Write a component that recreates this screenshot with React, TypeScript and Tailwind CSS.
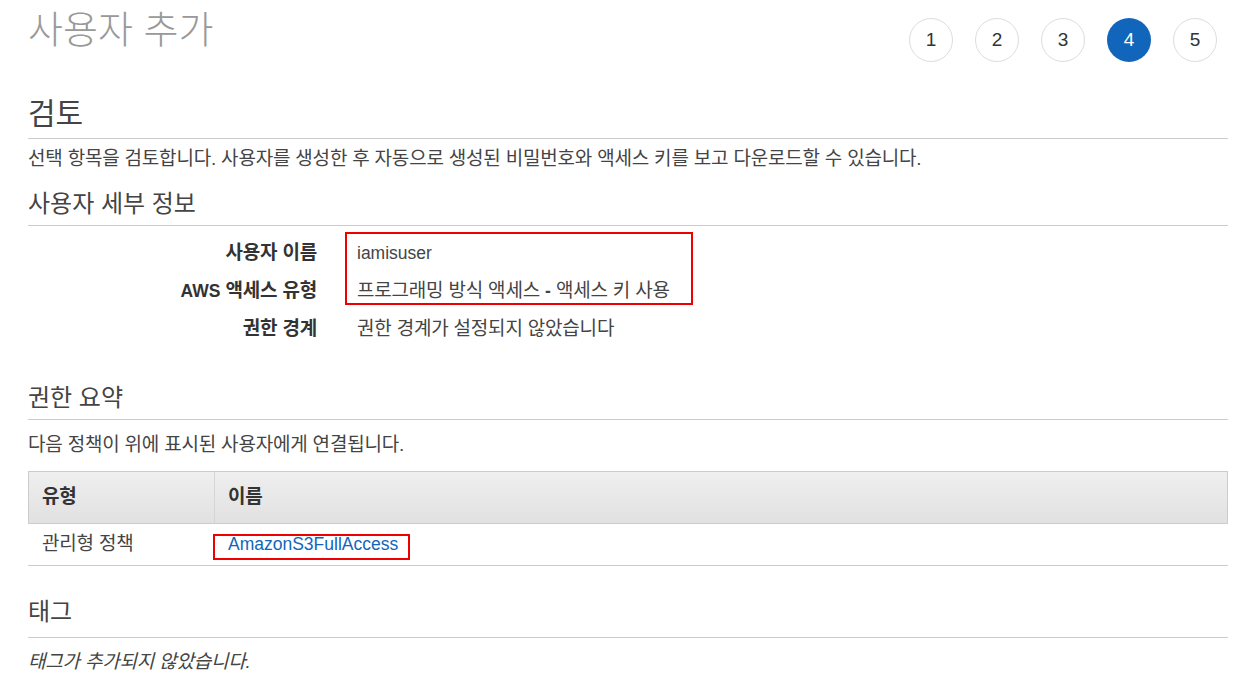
import React from "react";

const font = { fontFamily: '"Liberation Sans", "Noto Sans CJK KR", sans-serif' };

function Steps() {
  const steps = [1, 2, 3, 4, 5];
  return (
    <div className="mt-[18px] mr-[11px] flex gap-[22px]">
      {steps.map((s) =>
        s === 4 ? (
          <div
            key={s}
            className="flex h-[44px] w-[44px] items-center justify-center rounded-full bg-[#1166bb] text-[19px] text-white"
          >
            {s}
          </div>
        ) : (
          <div
            key={s}
            className="flex h-[44px] w-[44px] items-center justify-center rounded-full border border-[#dddddd] bg-white text-[19px] text-[#333333]"
          >
            {s}
          </div>
        )
      )}
    </div>
  );
}

export default function App() {
  return (
    <div className="min-h-[686px] w-[1260px] bg-white pl-[28px] pr-[32px] text-[#444444]" style={font}>
      <div className="flex items-start justify-between">
        <h1 className="mt-[8px] text-[38px] font-light leading-[44px] text-[#999999]">사용자 추가</h1>
        <Steps />
      </div>

      <h2 className="mt-[34px] border-b border-[#cccccc] pb-[6px] text-[30px] leading-[36px] text-[#444444]">검토</h2>
      <p className="mt-[8px] text-[19px] leading-[24px] tracking-[-0.2px]">
        선택 항목을 검토합니다. 사용자를 생성한 후 자동으로 생성된 비밀번호와 액세스 키를 보고 다운로드할 수 있습니다.
      </p>

      <h3 className="mt-[18px] border-b border-[#cccccc] pb-[6px] text-[24px] leading-[30px] text-[#444444]">
        사용자 세부 정보
      </h3>
      <div className="relative mt-[8px]">
        <div className="grid grid-cols-[289px_1fr] gap-x-[40px] text-[19px] leading-[24px] tracking-[-0.2px]">
          <div className="py-[7px] text-right font-bold text-[#333333]">사용자 이름</div>
          <div className="py-[7px] text-[17.5px] tracking-normal">iamisuser</div>
          <div className="py-[7px] text-right font-bold text-[#333333]">
            <span className="text-[17.5px] tracking-normal">AWS</span> 액세스 유형
          </div>
          <div className="py-[7px]">
            프로그래밍 방식 액세스 <span className="text-[17.5px] font-bold tracking-normal">-</span> 액세스 키 사용
          </div>
          <div className="py-[7px] text-right font-bold text-[#333333]">권한 경계</div>
          <div className="py-[7px]">권한 경계가 설정되지 않았습니다</div>
        </div>
        <div className="pointer-events-none absolute left-[317px] top-[-2px] h-[73px] w-[348px] border-2 border-[#ee0000]" />
      </div>

      <h3 className="mt-[35px] border-b border-[#cccccc] pb-[6px] text-[24px] leading-[30px] text-[#444444]">권한 요약</h3>
      <p className="mt-[13px] text-[19px] leading-[24px] tracking-[-0.2px]">다음 정책이 위에 표시된 사용자에게 연결됩니다.</p>

      <div className="mt-[14px]">
        <div className="flex h-[53px] border border-[#cccccc] bg-gradient-to-b from-[#efefef] to-[#e1e1e1] text-[19px] font-bold tracking-[-0.2px] text-[#333333]">
          <div className="flex w-[186px] items-center border-r border-[#d5d5d5] pl-[13px]">유형</div>
          <div className="flex flex-1 items-center pl-[13px]">이름</div>
        </div>
        <div className="relative flex h-[42px] border-b border-[#cccccc] text-[19px] tracking-[-0.2px]">
          <div className="flex w-[187px] items-center pl-[14px]">관리형 정책</div>
          <div className="flex flex-1 items-center pl-[13px]">
            <a className="text-[17.5px] tracking-normal text-[#1166bb]" href="#">
              AmazonS3FullAccess
            </a>
          </div>
          <div className="pointer-events-none absolute left-[185px] top-[10px] h-[26px] w-[197px] border-2 border-[#ee0000]" />
        </div>
      </div>

      <h3 className="mt-[31px] border-b border-[#cccccc] pb-[10px] text-[24px] leading-[30px] text-[#444444]">태그</h3>
      <p className="mt-[12px] text-[19px] italic leading-[24px] tracking-[-0.2px]">태그가 추가되지 않았습니다.</p>
    </div>
  );
}
